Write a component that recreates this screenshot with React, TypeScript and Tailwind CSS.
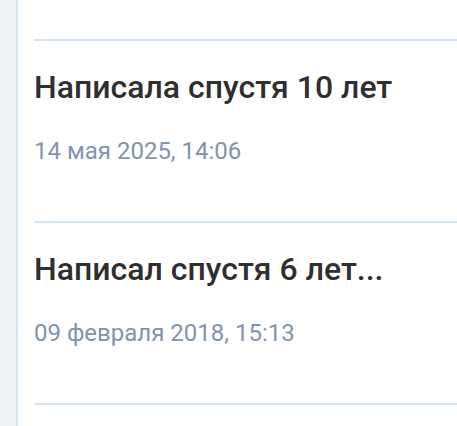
const posts = [
  { title: 'Написала спустя 10 лет', date: '14 мая 2025, 14:06' },
  { title: 'Написал спустя 6 лет...', date: '09 февраля 2018, 15:13' },
];

export default function App() {
  return (
    <div className="flex min-h-[426px] bg-white" style={{ fontFamily: 'Roboto, "Noto Sans", sans-serif' }}>
      {/* sidebar strip */}
      <div className="w-[18px] shrink-0 bg-[#edf1f5] border-r-2 border-[#d6e4f2]" />
      <div className="flex-1 pl-4">
        <div className="h-[39px]" />
        {posts.map((post) => (
          <div key={post.date} className="border-t-2 border-[#d5e4f3] pt-[27px] pb-[56px]">
            <div className="text-[32px] leading-[38px] font-medium text-[#2f2f2f]">{post.title}</div>
            <div className="mt-[31px] text-[24px] leading-[28px] text-[#8094ab]">{post.date}</div>
          </div>
        ))}
        <div className="border-t-2 border-[#d5e4f3]" />
      </div>
    </div>
  );
}
